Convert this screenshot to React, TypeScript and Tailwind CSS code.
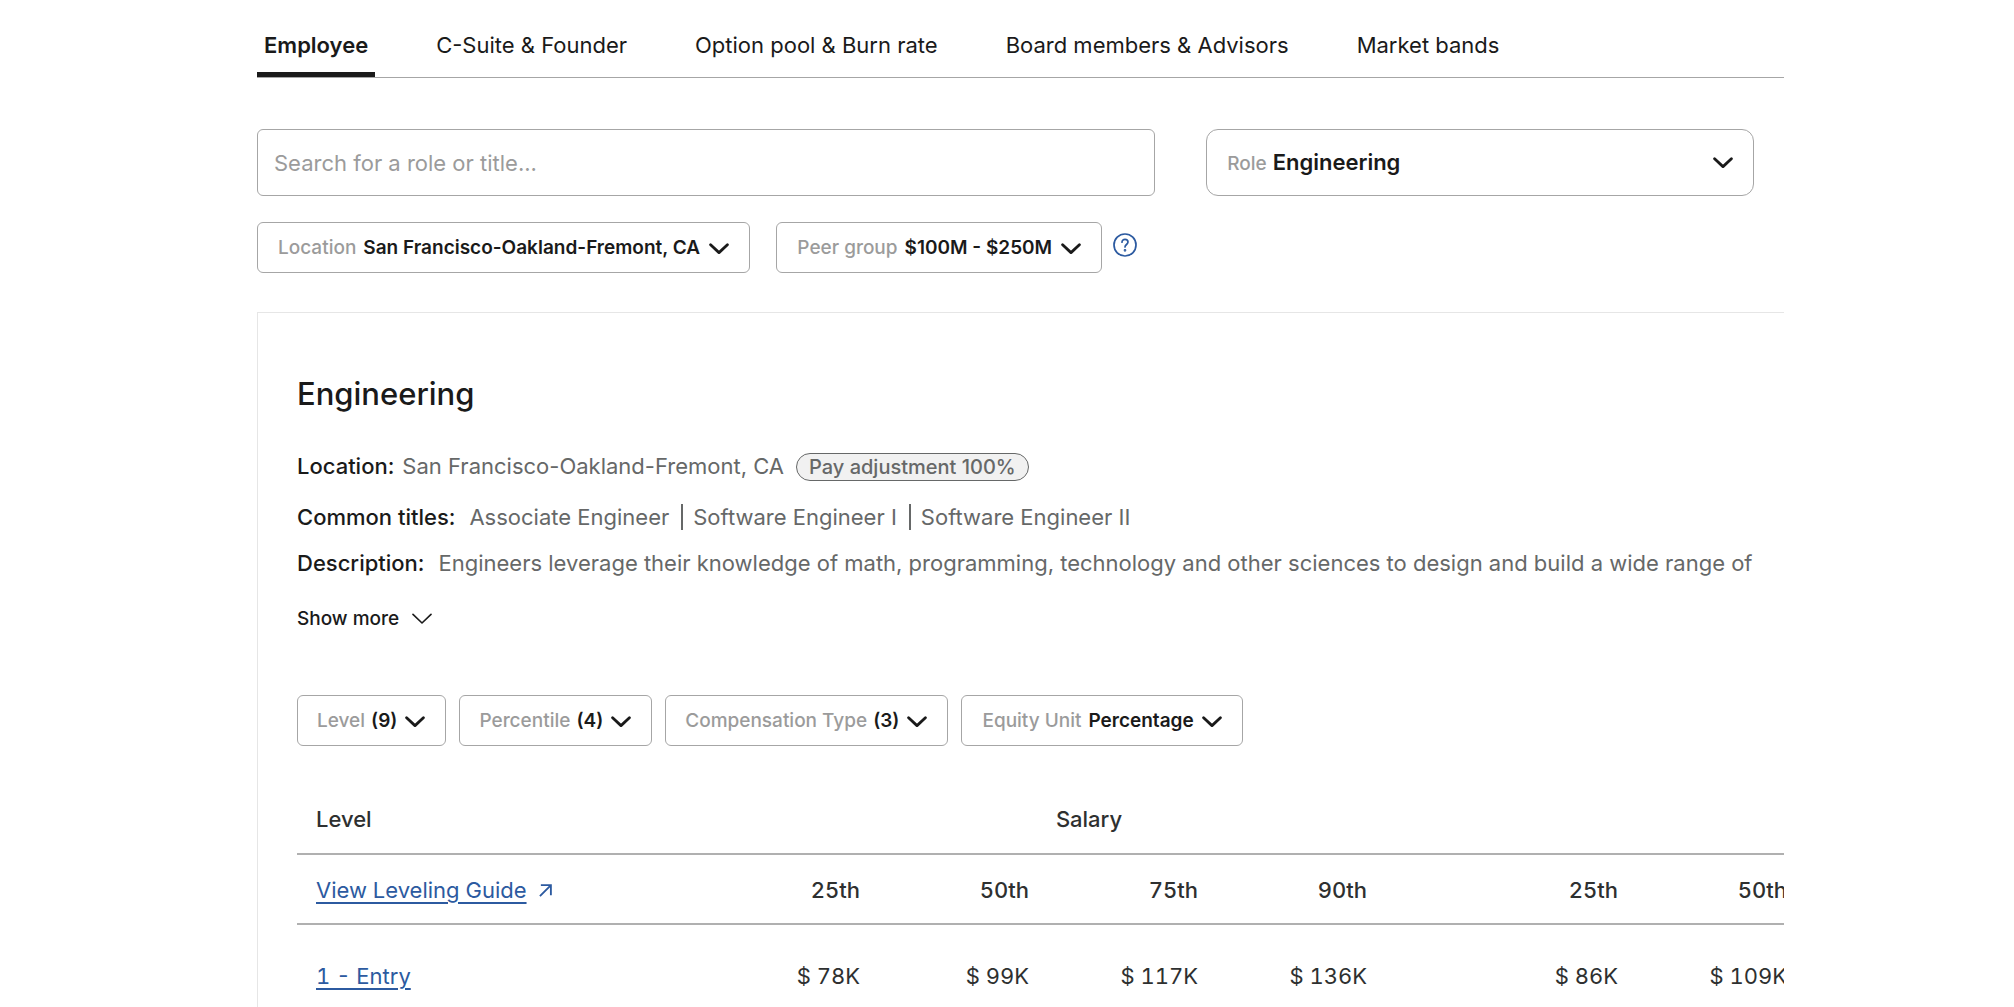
import { useState } from 'react'
import type { ReactNode } from 'react'

const tabs = ['Employee', 'C-Suite & Founder', 'Option pool & Burn rate', 'Board members & Advisors', 'Market bands']

const titles = ['Associate Engineer', 'Software Engineer I', 'Software Engineer II']

const percentiles = ['25th', '50th', '75th', '90th']

const salary = ['$ 78K', '$ 99K', '$ 117K', '$ 136K']
const total = ['$ 86K', '$ 109K']

const Chevron = () => (
  <svg viewBox="0 0 20 12" className="w-5 h-3 shrink-0 pointer-events-none" fill="none" stroke="currentColor" strokeWidth="2.8" strokeLinecap="round" strokeLinejoin="round" aria-hidden="true">
    <path d="M1.6 1.8 L10 9.6 L18.4 1.8" />
  </svg>
)

// dropdown with one choice
const Select = ({ label, value }: { label: string; value: string }) => (
  <label className="flex items-center h-[51px] pt-[2px] px-5 border border-[#a6a6a6] rounded-md text-[19px]">
    <span className="text-[#9b9b9b] font-medium mr-[7px]">{label}</span>
    <select className="appearance-none bg-transparent font-semibold mr-2">
      <option>{value}</option>
    </select>
    <Chevron />
  </label>
)

// dropdown with many choices, shows the count
const MultiSelect = ({ label, count }: { label: string; count: number }) => (
  <button aria-haspopup="listbox" className="flex items-center h-[51px] pt-[2px] pl-[19px] pr-5 border border-[#a6a6a6] rounded-md text-[19px]">
    <span className="text-[#9b9b9b] font-medium mr-[6px]">{label}</span>
    <span className="font-semibold mr-2">({count})</span>
    <Chevron />
  </button>
)

const Info = ({ label, children }: { label: string; children: ReactNode }) => (
  <div className="flex items-center whitespace-nowrap">
    <span className="font-medium text-[#1a1a1a]">{label}</span>
    {children}
  </div>
)

const App = () => {
  const [active, setActive] = useState('Employee')

  return (
    <div className="min-h-screen flex flex-col bg-white text-[#1a1a1a] pl-[257px] pr-[230px] font-['Inter',sans-serif]">
      {/* tabs */}
      <div role="tablist" className="flex h-[78px] pt-4 gap-[54px] border-b border-[#a6a6a6] text-[22px]">
        {tabs.map((tab) => (
          <button
            key={tab}
            role="tab"
            aria-selected={tab === active}
            onClick={() => setActive(tab)}
            className={
              tab === active
                ? 'px-[7px] pt-[2px] border-b-5 border-[#1a1a1a] font-semibold whitespace-nowrap'
                : 'px-[7px] pt-[2px] border-b-5 border-transparent whitespace-nowrap'
            }
          >
            {tab}
          </button>
        ))}
      </div>

      {/* search and filters */}
      <div className="flex gap-[51px] pt-[51px] pr-[30px]">
        <input
          type="text"
          aria-label="Search for a role or title"
          placeholder="Search for a role or title..."
          className="w-[60%] h-[67px] px-4 border border-[#a6a6a6] rounded-md text-[22px] placeholder:text-[#9b9b9b]"
        />
        <label className="flex-1 flex items-center h-[67px] px-5 border border-[#a6a6a6] rounded-xl">
          <span className="flex-1 flex items-baseline">
            <span className="text-[19px] text-[#9b9b9b] font-medium mr-[6px]">Role</span>
            <select className="flex-1 appearance-none bg-transparent text-[22px] font-semibold">
              <option>Engineering</option>
            </select>
          </span>
          <Chevron />
        </label>
      </div>
      <div className="flex pt-[26px]">
        <Select label="Location" value="San Francisco-Oakland-Fremont, CA" />
        <div className="ml-[26px]">
          <Select label="Peer group" value="$100M - $250M" />
        </div>
        <button aria-label="About peer groups" className="ml-[11px] self-start pt-[11px] text-[#2c5aa0]">
          <svg viewBox="0 0 24 24" className="w-6 h-6" fill="none" stroke="currentColor" strokeWidth="1.7" strokeLinecap="round" strokeLinejoin="round" aria-hidden="true">
            <circle cx="12" cy="12" r="11" />
            <path d="M9 9.2 C9 7.4 10.3 6.4 12 6.4 C13.8 6.4 15 7.5 15 9.1 C15 11.4 12 11.6 12 14" />
            <circle cx="12" cy="17.3" r="0.5" fill="currentColor" />
          </svg>
        </button>
      </div>

      {/* role card */}
      <div className="flex-1 mt-[39px] pl-[39px] pt-[57px] border-l border-t border-[#e6e6e6] overflow-hidden">
        <h1 className="text-[31px] leading-[48px] font-medium">Engineering</h1>

        <div className="pt-[33px] text-[22px] leading-[30px] text-[#666868]">
          <Info label="Location:">
            <span className="ml-2">San Francisco-Oakland-Fremont, CA</span>
            <span className="ml-3 mt-[2px] px-3 h-7 border border-[#666868] rounded-full bg-[#f1f1f1] text-[20px] leading-[26px] font-medium">
              Pay adjustment 100%
            </span>
          </Info>
          <div className="pt-[21px]">
            <Info label="Common titles:">
              <ul className="flex ml-[14px]">
                {titles.map((title, i) => (
                  <li key={title} className={i > 0 ? 'pl-3 ml-3 relative' : ''}>
                    {i > 0 && <span className="absolute left-0 top-[2px] h-[26px] border-l-2 border-[#666868]" />}
                    {title}
                  </li>
                ))}
              </ul>
            </Info>
          </div>
          <div className="pt-4">
            <Info label="Description:">
              <p className="ml-[14px]">Engineers leverage their knowledge of math, programming, technology and other sciences to design and build a wide range of</p>
            </Info>
          </div>
        </div>

        <button className="flex items-center gap-[13px] mt-[25px] text-[19px] leading-8 font-medium">
          Show more
          <svg viewBox="0 0 20 12" className="w-5 h-3" fill="none" stroke="currentColor" strokeWidth="1.6" strokeLinecap="round" strokeLinejoin="round" aria-hidden="true">
            <path d="M1 1.4 L10 10 L19 1.4" />
          </svg>
        </button>

        <div className="flex gap-[13px] pt-[60px]">
          <MultiSelect label="Level" count={9} />
          <MultiSelect label="Percentile" count={4} />
          <MultiSelect label="Compensation Type" count={3} />
          <Select label="Equity Unit" value="Percentage" />
        </div>

        {/* compensation table */}
        <table className="table-fixed w-[1550px] mt-[38px] text-[22px] leading-[30px] text-[#2e3030] tabular-nums">
          <colgroup>
            <col className="w-[454px]" />
            <col span={4} className="w-[169px]" />
            <col className="w-[82px]" />
            <col span={2} className="w-[169px]" />
          </colgroup>
          <thead>
            <tr className="h-[70px] border-b-2 border-[#b0b0b0]">
              <th scope="col" className="pl-[19px] text-left font-medium">Level</th>
              <th scope="colgroup" colSpan={4} className="font-medium">Salary</th>
              <td colSpan={3}></td>
            </tr>
            <tr className="h-[70px] border-b-2 border-[#b0b0b0]">
              <th scope="col" className="pl-[19px] pt-[2px] text-left font-normal">
                <a href="#leveling-guide" className="flex items-center gap-3 text-[#2c5aa0]">
                  <span className="underline underline-offset-4 decoration-2">View Leveling Guide</span>
                  <svg viewBox="0 0 14 14" className="w-[13px] h-[13px]" fill="none" stroke="currentColor" strokeWidth="2" aria-hidden="true">
                    <path d="M1 13 L12.6 1.4 M2 1.2 H12.8 V12" />
                  </svg>
                </a>
              </th>
              {percentiles.map((p) => (
                <th key={p} scope="col" className="pr-[60px] pt-[2px] text-right font-medium">{p}</th>
              ))}
              <td></td>
              {percentiles.slice(0, 2).map((p) => (
                <th key={p} scope="col" className="pr-[60px] pt-[2px] text-right font-medium">{p}</th>
              ))}
            </tr>
          </thead>
          <tbody>
            <tr className="h-[80px]">
              <th scope="row" className="pl-[19px] pt-[22px] text-left font-normal">
                <a href="#entry" className="text-[#2c5aa0] underline underline-offset-4 decoration-2">1 - Entry</a>
              </th>
              {salary.map((s) => (
                <td key={s} className="pr-[60px] pt-[22px] text-right whitespace-nowrap">{s}</td>
              ))}
              <td></td>
              {total.map((s) => (
                <td key={s} className="pr-[60px] pt-[22px] text-right whitespace-nowrap">{s}</td>
              ))}
            </tr>
          </tbody>
        </table>
      </div>
    </div>
  )
}

export default App
